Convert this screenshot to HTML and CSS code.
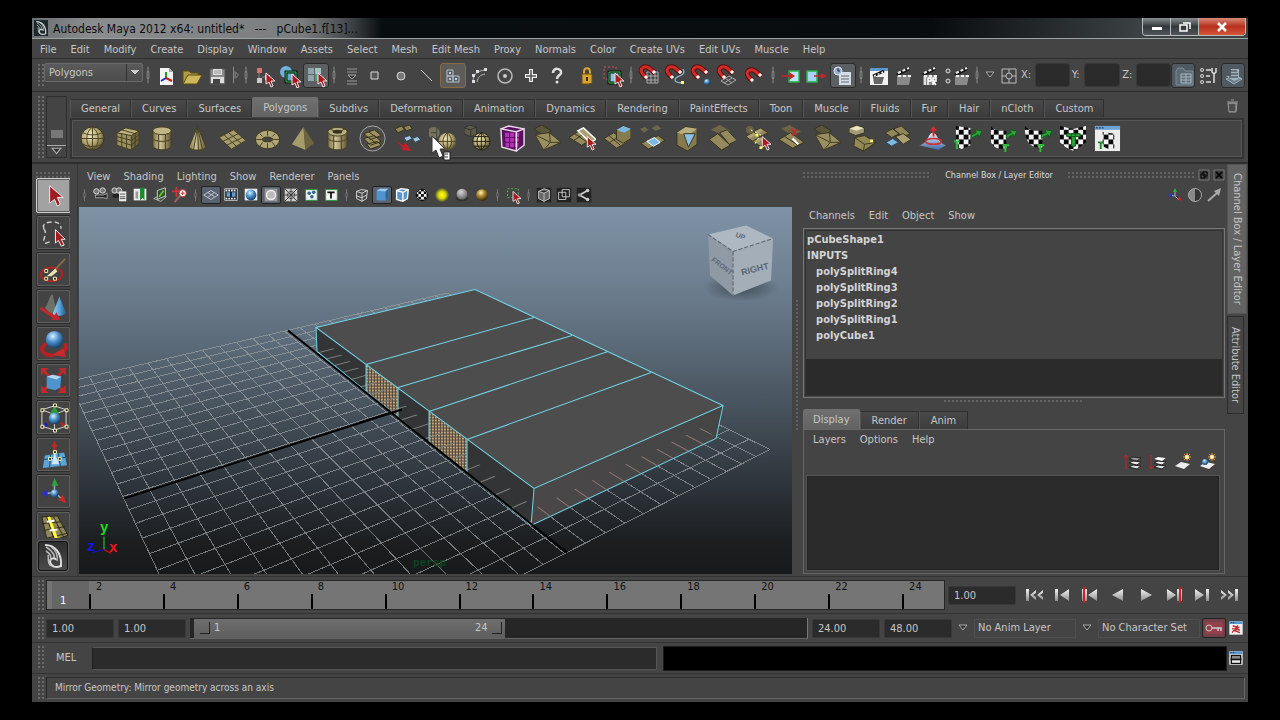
FILE: index.html
```html
<!DOCTYPE html>
<html lang="en">
<head>
<meta charset="utf-8">
<title>Autodesk Maya 2012 x64: untitled*</title>
<link rel="stylesheet" href="styles.css">
</head>
<body>
<svg class="defs" aria-hidden="true">
<defs>
<radialGradient id="gTan" cx=".4" cy=".35" r=".7"><stop offset="0" stop-color="#f4ebc0"/><stop offset=".6" stop-color="#a99c68"/><stop offset="1" stop-color="#4e4728"/></radialGradient>
<linearGradient id="gCyl"><stop offset="0" stop-color="#7a7148"/><stop offset=".4" stop-color="#cfc494"/><stop offset="1" stop-color="#5e5634"/></linearGradient>
<radialGradient id="gBlue" cx=".4" cy=".3" r=".7"><stop offset="0" stop-color="#d8f0ff"/><stop offset=".5" stop-color="#4a90cc"/><stop offset="1" stop-color="#173e66"/></radialGradient>
<radialGradient id="gGrey" cx=".4" cy=".3" r=".7"><stop offset="0" stop-color="#d8d8d8"/><stop offset="1" stop-color="#666"/></radialGradient>
<radialGradient id="gGold" cx=".4" cy=".3" r=".7"><stop offset="0" stop-color="#fff6c0"/><stop offset=".4" stop-color="#b8923a"/><stop offset="1" stop-color="#3a2a08"/></radialGradient>
<radialGradient id="gSun"><stop offset="0" stop-color="#ffff30"/><stop offset=".5" stop-color="#d8d800"/><stop offset="1" stop-color="#d8d800" stop-opacity="0"/></radialGradient>
<linearGradient id="gPeak" x2="0" y2="1"><stop offset="0" stop-color="#f0f6ff"/><stop offset="1" stop-color="#3a66a8"/></linearGradient>
<linearGradient id="gKey" x2="0" y2="1"><stop offset="0" stop-color="#f4f4f4"/><stop offset="1" stop-color="#8c8c8c"/></linearGradient>
<linearGradient id="gCone"><stop offset="0" stop-color="#9ad0f0"/><stop offset=".5" stop-color="#5aa4d8"/><stop offset="1" stop-color="#1f5a8c"/></linearGradient>
<pattern id="chk" width="10" height="10" patternUnits="userSpaceOnUse"><path fill="#f4f4f4" d="M0 0h10v10H0z"/><path fill="#080808" d="M0 0h5v5H0zM5 5h5v5H5z"/></pattern>
<pattern id="chk3" width="6" height="6" patternUnits="userSpaceOnUse"><path fill="#f4f4f4" d="M0 0h6v6H0z"/><path fill="#080808" d="M0 0h3v3H0zM3 3h3v3H3z"/></pattern>
<g id="rc"><path d="M0 0v11l3-2 2 5 2-1-2-5h4z" fill="#a81c20" stroke="#f0e4e4"/></g>
<g id="mag"><path d="M9 14L5 9C2 4 8 1 12 4l6 5" fill="none" stroke="#571010" stroke-width="5"/><path d="M9 14L5 9C2 4 8 1 12 4l6 5" fill="none" stroke="#d32a26" stroke-width="3"/><path d="M8 12l2 2M16 7l2 2" stroke="#fff" stroke-width="3"/></g>
<g id="clap"><path d="M4 11h14l-2 10H4z" fill="#8a8a8a"/><path d="M3 10l13-7 1 3L5 12z" fill="#1a1a1a"/><path d="M5 9l11-5M5 12h14" stroke="#f0f0f0" stroke-width="2" stroke-dasharray="3 2" fill="none"/></g>
<g id="winbox"><path d="M2 2h20v20H2z" fill="#f2f2f2"/><path d="M2 2h20v4H2z" fill="#5a9ad0"/><path d="M4 4h7" stroke="#123" stroke-dasharray="2 1"/></g>
<g id="quads"><path d="M2 12l8-5 7 5-8 5zM10 7l7-4 8 5-8 4zM9 17l8-5 8 5-8 5z" fill="#8f8659" stroke="#403a20"/><path d="M3 12l7-4 3 2-7 4zM11 7l6-3 3 2-6 3zM10 17l7-4 3 2-7 4z" fill="#aca273"/></g>
<g id="chkgreen"><path d="M18 14v-4l5-2-1-3 7 1-3 7-1-3-4 2z" fill="#27a436" stroke="#125a1a"/></g>
<symbol id="sep" viewBox="0 0 8 24"><path d="M4 2v20" stroke="#999"/><path d="M3 8h2v8H3z" fill="#333" stroke="#999"/></symbol>
<symbol id="tri" viewBox="0 0 12 10"><path d="M2 2h8L6 7z" fill="#333" stroke="#aaa"/></symbol>

<symbol id="logo" viewBox="0 0 24 24"><path d="M4 1c10 0 17 8 16 21-5 2-10 1-11-4 0-4 5-5 6-2" fill="none" stroke="#ddd" stroke-width="2"/><path d="M5 3c7 4 9 9 8 11M5 7c5 3 6 7 4 10M7 11c1 4-1 8 3 11M10 3c6 4 7 9 6 14" fill="none" stroke="#bbb" stroke-width="1.5"/></symbol>

<symbol id="t-new" viewBox="0 0 24 24"><path d="M6 4h9l4 4v13H6z" fill="#f4f4f4"/><path d="M15 4v4h4z" fill="#aaa"/><path d="M12 14V8" stroke="#1a9a2a" stroke-width="2"/><path d="M12 14l-5 3" stroke="#2030c0" stroke-width="2"/><path d="M12 14l6 3" stroke="#c81a1a" stroke-width="2"/></symbol>
<symbol id="t-open" viewBox="0 0 24 24"><path d="M3 20V7h6l2 2h7v4" fill="#b09a44" stroke="#5c4c12"/><path d="M3 20l5-9h14l-5 9z" fill="#cdb65c" stroke="#5c4c12"/></symbol>
<symbol id="t-save" viewBox="0 0 24 24"><path d="M4 5h15v15H4z" fill="#8a8a8a" stroke="#555"/><path d="M7 5h9v6H7z" fill="#ddd"/><path d="M8 7h7M8 9h7" stroke="#999"/><path d="M5 13h13v6H5z" fill="#ddd"/><path d="M7 15h7v5H7z" fill="#444"/></symbol>
<symbol id="t-arrow" viewBox="0 0 12 24"><path d="M3 2v20M5 8l4 4-4 4z" fill="none" stroke="#999"/></symbol>
<symbol id="t-hier" viewBox="0 0 24 24"><path d="M5 4h5v5H5z" fill="#e07070"/><path d="M5 14h5v5H5zM13 11h5v5h-5z" fill="#ccc"/><path d="M7 9v5M10 13h3" stroke="#888"/><use href="#rc" x="14" y="9"/></symbol>
<symbol id="t-obj" viewBox="0 0 24 24"><circle cx="8" cy="8" r="6" fill="#6fb2dc"/><path d="M8 8h10v10H8z" fill="#6aa8d0" stroke="#111" stroke-width="3"/><path d="M8 8h10v10H8z" fill="none" stroke="#2ac050"/><use href="#rc" x="14" y="10"/></symbol>
<symbol id="t-comp" viewBox="0 0 24 24"><path d="M4 4h6v6H4zM11 4h6v6h-6zM4 11h6v6H4zM11 11h6v6h-6z" fill="#8fa6a8"/><path d="M11 4h6v6h-6z" fill="#a4c4be"/><path d="M12 10v7" stroke="#3aaa7a" stroke-width="2"/><use href="#rc" x="14" y="9"/></symbol>
<symbol id="t-coll" viewBox="0 0 24 24"><path d="M7 5h10M7 8h10M7 17h10M7 20h10" stroke="#999"/><path d="M8 11h8l-4 4z" fill="#333" stroke="#aaa"/></symbol>
<symbol id="t-sq" viewBox="0 0 24 24"><path d="M8 8h7v7H8z" fill="#555" stroke="#d8d8d8"/></symbol>
<symbol id="t-dot" viewBox="0 0 24 24"><circle cx="12" cy="12" r="4" fill="#777" stroke="#d8d8d8"/></symbol>
<symbol id="t-line" viewBox="0 0 24 24"><path d="M6 6l11 11" stroke="#ccc"/></symbol>
<symbol id="t-face" viewBox="0 0 24 24"><path d="M6 6h6v6H6zM6 12h6v6H6zM12 12h6v6h-6z" fill="#555e66" stroke="#b4bcc4"/><path d="M8 9h2M8 15h2M14 15h2" stroke="#ccd" stroke-width="2"/></symbol>
<symbol id="t-curve" viewBox="0 0 24 24"><path d="M6 18c0-8 4-11 12-12M10 18c1-5 3-7 8-8" fill="none" stroke="#bbb"/><path d="M5 16h3v3H5zM5 10h3v3H5zM9 6h3v3H9zM17 4h3v3h-3z" fill="#ddd"/></symbol>
<symbol id="t-circ" viewBox="0 0 24 24"><circle cx="12" cy="12" r="7" fill="none" stroke="#bbb" stroke-width="1.5"/><circle cx="12" cy="12" r="2" fill="#ccc"/></symbol>
<symbol id="t-plus" viewBox="0 0 24 24"><path d="M12 5v13M6 12h12" stroke="#eee" stroke-width="4"/><path d="M12 6v11M7 12h10" stroke="#555" stroke-width="1.5"/></symbol>
<symbol id="t-q" viewBox="0 0 24 24"><path d="M8 9c0-6 9-5 8 0-1 3-4 2-4 6" fill="none" stroke="#e0e0e0" stroke-width="2.5"/><circle cx="12" cy="18" r="1.5" fill="#e0e0e0"/></symbol>
<symbol id="t-lock" viewBox="0 0 24 24"><path d="M9 11V8c0-5 6-5 6 0v3" fill="none" stroke="#d8a838" stroke-width="2"/><path d="M7 10h10v9l-3 1H7z" fill="#d9a42e" stroke="#6d4c08"/><path d="M12 13v4" stroke="#3a2804" stroke-width="2"/></symbol>
<symbol id="t-hl" viewBox="0 0 24 24"><path d="M3 3h12v12H3z" fill="none" stroke="#d84a5a" stroke-dasharray="2 2"/><path d="M8 8h11v11H8z" fill="#8cc4e8" stroke="#111" stroke-width="3"/><path d="M8 8h11v11H8z" fill="none" stroke="#30c050"/><use href="#rc" x="14" y="9"/></symbol>
<symbol id="t-m1" viewBox="0 0 24 24"><path d="M10 8h11v11H10zM14 8v11M18 8v11M10 12h11M10 16h11" fill="none" stroke="#aaa"/><use href="#mag"/></symbol>
<symbol id="t-m2" viewBox="0 0 24 24"><path d="M20 5c4 8-8 6-8 11 0 3 5 3 9 3" fill="none" stroke="#7faac0" stroke-width="1.5"/><path d="M18 17h3v3h-3z" fill="#ff6"/><use href="#mag"/></symbol>
<symbol id="t-m3" viewBox="0 0 24 24"><circle cx="18" cy="18" r="3" fill="url(#gBlue)"/><use href="#mag"/></symbol>
<symbol id="t-m4" viewBox="0 0 24 24"><path d="M6 17l8-5 7 4-8 5zM10 14l7 5M9 19l8-5" fill="none" stroke="#aaa"/><use href="#mag"/></symbol>
<symbol id="t-m5" viewBox="0 0 24 24"><use href="#mag" x="2" y="3"/></symbol>
<symbol id="t-in" viewBox="0 0 24 24"><path d="M8 7h10v11H8z" fill="#bfe0ff" stroke="#28b048" stroke-width="1.5"/><path d="M0 12h9" stroke="#c22" stroke-width="1.5"/><path d="M8 8l6 4-6 4z" fill="#c22"/></symbol>
<symbol id="t-out" viewBox="0 0 24 24"><path d="M3 7h10v11H3z" fill="#a8d0f8" stroke="#28b048" stroke-width="1.5"/><path d="M10 12h8" stroke="#c22" stroke-width="1.5"/><path d="M17 9l6 3-6 3z" fill="#c22"/></symbol>
<symbol id="t-hist" viewBox="0 0 24 24"><path d="M8 8h12v13H8z" fill="#d4dde6"/><path d="M10 12h8M10 15h8M10 18h8" stroke="#667"/><circle cx="7" cy="7" r="4" fill="#9ac" stroke="#def"/><path d="M7 4v3h2" stroke="#123" fill="none"/></symbol>
<symbol id="t-rv" viewBox="0 0 24 24"><path d="M3 4h18v17H3z" fill="#f2f2f2"/><path d="M3 4h18v3H3z" fill="#5a9ad0"/><path d="M6 13h11l-2 7H7z" fill="#666"/><path d="M6 12l11-5" stroke="#111" stroke-width="3"/><path d="M7 12l9-4" stroke="#eee" stroke-width="1.5" stroke-dasharray="2 2"/></symbol>
<symbol id="t-clap" viewBox="0 0 24 24"><use href="#clap"/></symbol>
<symbol id="t-ipr" viewBox="0 0 24 24"><use href="#clap"/><path d="M6 13v8M9 21v-7h3v3H9M14 21v-7h3v3h-3l3 4" stroke="#fff" stroke-width="1.5" fill="none"/></symbol>
<symbol id="t-rs" viewBox="0 0 24 24"><use href="#clap" x="6"/><circle cx="3" cy="7" r="2" fill="#555" stroke="#ddd"/><circle cx="3" cy="17" r="2" fill="#555" stroke="#ddd"/></symbol>
<symbol id="t-xyz" viewBox="0 0 24 24"><path d="M5 5h14v14H5zM12 5v14M5 12h14" fill="none" stroke="#bbb"/><circle cx="12" cy="12" r="3" fill="#444" stroke="#bbb"/></symbol>
<symbol id="t-cb" viewBox="0 0 24 24"><path d="M4 7l2-3h5l2 3h8v14H4z" fill="#5b6a75" stroke="#7c8d98"/><path d="M9 10h10v9H9zM9 13h10M9 16h10M14 10v9" fill="none" stroke="#aebac2"/></symbol>
<symbol id="t-ts" viewBox="0 0 24 24"><circle cx="6" cy="6" r="1.5" fill="none" stroke="#ddd"/><circle cx="6" cy="12" r="1.5" fill="none" stroke="#ddd"/><circle cx="6" cy="18" r="1.5" fill="none" stroke="#ddd"/><path d="M10 6h5M10 12h4M10 18h5" stroke="#ddd" stroke-width="1.5"/><path d="M16 4v4l2 2v9M20 4v4l-2 2" fill="none" stroke="#ddd" stroke-width="1.5"/></symbol>
<symbol id="t-ly" viewBox="0 0 24 24"><path d="M4 15l8-3 8 3-8 5z" fill="#6b7b86" stroke="#9fb2bf"/><path d="M4 12h5V5h8v8l3 1-8 3z" fill="#9fb2bf"/><path d="M9 7h6M9 10h7M7 13h9" stroke="#333"/></symbol>
<symbol id="trash" viewBox="0 0 14 16"><path d="M3 5h9l-1 9H4zM2 4h11M6 2h3" fill="#777" stroke="#999"/><path d="M5 6v7M7 6v7M9 6v7" stroke="#222"/></symbol>

<symbol id="s-sphere" viewBox="0 0 28 28"><circle cx="14" cy="14" r="12" fill="url(#gTan)" stroke="#3a341c"/><path d="M2 14h24M4 8c6 3 14 3 20 0M4 20c6 3 14 3 20 0M14 2v24M14 2c-8 6-8 18 0 24M14 2c8 6 8 18 0 24" fill="none" stroke="#4c4424"/></symbol>
<symbol id="s-cube" viewBox="0 0 28 28"><path d="M3 8l9-5 14 3-8 5z" fill="#bdb280"/><path d="M3 8l15 3v15L3 21z" fill="#9c9160"/><path d="M18 11l8-5v13l-8 7z" fill="#6e653e"/><path d="M3 8l15 3v15L3 21zM18 11l8-5v13l-8 7M3 8l9-5 14 3M8 9v14M13 10v15M3 12l15 4 8-6M3 16l15 5 8-7M8 5l14 4v14" fill="none" stroke="#453e20"/></symbol>
<symbol id="s-cyl" viewBox="0 0 28 28"><path d="M4 6v16c2 5 17 5 19 0V6z" fill="url(#gCyl)" stroke="#453e20"/><ellipse cx="13.5" cy="6" rx="9.5" ry="4" fill="#c0b688" stroke="#453e20"/><path d="M4 14c2 4 17 4 19 0M10 10v15M17 10v15" fill="none" stroke="#453e20"/></symbol>
<symbol id="s-cone" viewBox="0 0 28 28"><path d="M14 2L5 23c3 4 15 4 18 0z" fill="url(#gCyl)" stroke="#453e20"/><path d="M14 2l-4 23M14 2l1 24M14 2l5 23" stroke="#453e20"/></symbol>
<symbol id="s-plane" viewBox="0 0 28 28"><path d="M0 13l15-8 13 11-15 9z" fill="#a59b6b" stroke="#453e20"/><path d="M5 10l13 12M10 8l13 11M4 17l16-8M8 21l16-8" stroke="#453e20"/></symbol>
<symbol id="s-torus" viewBox="0 0 28 28"><ellipse cx="14" cy="15" rx="9" ry="6" fill="none" stroke="#453e20" stroke-width="8"/><ellipse cx="14" cy="15" rx="9" ry="6" fill="none" stroke="#b0a574" stroke-width="6"/><path d="M6 9l3 3M14 6v5M22 9l-3 3M1 15h7M20 15h7M6 22l3-4M14 19v6M22 22l-3-4" stroke="#453e20"/></symbol>
<symbol id="s-pyr" viewBox="0 0 28 28"><path d="M15 2L3 20l14 6z" fill="#a59b6b"/><path d="M15 2l2 24 9-7z" fill="#6e653e"/></symbol>
<symbol id="s-pipe" viewBox="0 0 28 28"><path d="M4 7v15c2 5 18 5 20 0V7z" fill="url(#gCyl)" stroke="#453e20"/><ellipse cx="14" cy="7" rx="10" ry="4.5" fill="#b9ae7e" stroke="#453e20"/><ellipse cx="14" cy="7" rx="5" ry="2" fill="#38331c"/><path d="M4 14c2 4 18 4 20 0M10 11v14M18 11v14M6 4l4 2M22 4l-4 2" fill="none" stroke="#453e20"/></symbol>
<symbol id="s-comb" viewBox="0 0 28 28"><circle cx="14" cy="14" r="13" fill="#4a4a4a" stroke="#aaa"/><path d="M5 9l11-4 7 6-11 4zM5 14l11-3 7 6-11 4zM8 20l11-3 4 4-11 4z" fill="#9c9160" stroke="#353018"/><path d="M10 7l8 6M10 13l8 6" stroke="#353018"/></symbol>
<symbol id="s-sepr" viewBox="0 0 28 28"><path d="M1 4l7-3 3 4-7 3zM10 2l6-2 3 4-6 2z" fill="#8f8659" stroke="#38331c"/><path d="M10 13l6-2 3 3-6 3zM19 14l5-2 4 3-6 3z" fill="#9cc8e4" stroke="#345"/><path d="M1 16l9 5 2-3 6 9-10-1 1-3z" fill="#c02028"/></symbol>
<symbol id="s-mirror" viewBox="0 0 28 28"><circle cx="5" cy="8" r="6" fill="#77735f"/><path d="M8 3v10M2 8h6" stroke="#444"/><circle cx="19" cy="17" r="9" fill="url(#gTan)"/><path d="M10 17h18M19 8v18M19 8c-6 5-6 13 0 18M19 8c6 5 6 13 0 18" fill="none" stroke="#4c4424"/></symbol>
<symbol id="s-smooth" viewBox="0 0 28 28"><path d="M0 3l6-3 7 2v8l-7 2-6-3z" fill="#5d5a48" stroke="#333"/><path d="M0 3l7 2 6-3M7 5v7" fill="none" stroke="#333"/><circle cx="18" cy="17" r="9" fill="url(#gTan)" stroke="#2b2818"/><path d="M9 17h18M11 12h14M11 22h14M18 8v18M18 8c-6 5-6 13 0 18M18 8c6 5 6 13 0 18" fill="none" stroke="#222010"/></symbol>
<symbol id="s-purple" viewBox="0 0 28 28"><path d="M2 4l8-3 16 3v17l-8 6-15-4z" fill="#58105c"/><path d="M6 8h15l-1 15H7z" fill="#b432b8"/><path d="M11 7v17M16 7v17M6 13h15M6 18h15" stroke="#58105c"/><path d="M2 4l16 3v20L3 23zM18 7l8-3v17l-8 6M2 4l8-3 16 3" fill="none" stroke="#ecd8ec" stroke-width="1.5"/></symbol>
<symbol id="s-poly1" viewBox="0 0 28 28"><path d="M0 4l8-4 10 6-8 5z" fill="#5a563e" stroke="#38331c"/><path d="M1 10l15-2 12 10-18 8z" fill="#9a8f62" stroke="#403a20"/><path d="M1 10l16 8 11 0M17 18l-7 8M16 8l1 10" stroke="#403a20" fill="none"/></symbol>
<symbol id="s-split" viewBox="0 0 28 28"><path d="M0 13l12-8 13 9-12 7z" fill="#948a5e" stroke="#38331c"/><path d="M6 9l13 9M5 16l12-8" stroke="#38331c"/><path d="M9 6l6-3 13 12-6 3z" fill="#a9a077" stroke="#fff" stroke-width="1.5"/><use href="#rc" x="19" y="12"/></symbol>
<symbol id="s-extr" viewBox="0 0 28 28"><path d="M0 14l10-6 14 10-11 6z" fill="#948a5e" stroke="#38331c"/><path d="M5 11l12 10M6 18l11-7" stroke="#38331c"/><path d="M13 5l7-4 8 3v10l-8 5-7-4z" fill="#857c50" stroke="#38331c"/><path d="M13 5l7-4 8 3-7 4z" fill="#79b8e0"/></symbol>
<symbol id="s-bridge" viewBox="0 0 28 28"><path d="M1 4l5-2 4 3-5 3zM13 3l6-3 4 4-6 2z" fill="#6c674e"/><path d="M2 19l18-8 7 5-17 9z" fill="#8f8659" stroke="#38331c"/><path d="M8 17l8-4 6 5-7 4z" fill="#7cb8e0" stroke="#fff"/></symbol>
<symbol id="s-app" viewBox="0 0 28 28"><path d="M3 8l9-6 12 2v16l-10 7-11-6z" fill="#857b4e" stroke="#38331c"/><path d="M3 8l11 3 10-7L12 2z" fill="#b9ae80"/><path d="M10 9h12l-7 14z" fill="#8cc0e4" stroke="#38331c"/></symbol>
<symbol id="s-merge" viewBox="0 0 28 28"><path d="M2 5l9-5 11 6-9 4z" fill="#6f6848"/><path d="M0 15l9-6 13 12-9 5zM11 8l8-3 10 11-8 4z" fill="#948a5e" stroke="#38331c"/></symbol>
<symbol id="s-knife" viewBox="0 0 28 28"><use href="#quads"/><circle cx="6" cy="5" r="4" fill="#6b6440"/><path d="M7 5l10 5-7 12" fill="none" stroke="#fff" stroke-dasharray="2 3"/><path d="M12 9h3v3h-3zM16 22h3v3h-3z" fill="#ff6"/><use href="#rc" x="19" y="12"/></symbol>
<symbol id="s-cutf" viewBox="0 0 28 28"><path d="M2 4l9-4 12 7-9 4z" fill="#6b6440"/><path d="M0 15l12-7 14 10-12 6z" fill="#948a5e" stroke="#38331c"/><path d="M6 12l14 9" stroke="#38331c"/><path d="M13 4l5 6M18 4l-4 7" stroke="#c02830" stroke-width="2"/><path d="M14 14l6 6" stroke="#fff" stroke-width="2"/></symbol>
<symbol id="s-crease" viewBox="0 0 28 28"><path d="M0 3l8-3 8 3v5l-9 3-7-3z" fill="#a49b75" stroke="#38331c"/><path d="M1 4l7-3 7 2-7 3z" fill="#ece6c8"/><path d="M6 13l10-2 12 7-13 9-10-5z" fill="#938954" stroke="#38331c"/><path d="M6 13l10 7 12-2M16 20l-1 7" stroke="#38331c" fill="none"/><path d="M22 15h3v3h-3z" fill="#ff6"/></symbol>
<symbol id="s-quadb" viewBox="0 0 28 28"><path d="M1 8l8-4 7 5-8 4zM10 4l8-3 9 8-8 4z" fill="#8f8659" stroke="#38331c"/><path d="M2 18l7-4 6 4-7 4z" fill="#7cb8e0" stroke="#345"/><path d="M12 12l8-3 8 6-8 5z" fill="#a89e70" stroke="#38331c"/></symbol>
<symbol id="s-soft" viewBox="0 0 28 28"><path d="M0 21c9-1 9-12 14-13 6 1 6 11 14 13l-8 5z" fill="url(#gPeak)"/><ellipse cx="15" cy="17" rx="8" ry="3" fill="none" stroke="#d22c30" stroke-width="1.5"/><path d="M15 12V5" stroke="#d22c30" stroke-width="2"/><path d="M11 6l4-5 4 5z" fill="#d22c30"/></symbol>
<symbol id="s-uv1" viewBox="0 0 28 28"><path d="M2 1l15 2v18L8 25 2 22z" fill="url(#chk)"/><use href="#chkgreen"/><path d="M0 17h6M3 17v8" stroke="#27c436" stroke-width="2"/></symbol>
<symbol id="s-uv2" viewBox="0 0 28 28"><path d="M2 1c4 6 10 5 16 5v18c-9 2-15-2-16-7z" fill="url(#chk)"/><use href="#chkgreen"/><path d="M14 21h7M17 21v7" stroke="#27c436" stroke-width="2"/></symbol>
<symbol id="s-uv3" viewBox="0 0 28 28"><path d="M1 1c5 6 12 5 18 5v17C8 25 0 18 1 1z" fill="url(#chk)"/><use href="#chkgreen"/><path d="M14 21h7M17 21v7" stroke="#27c436" stroke-width="2"/></symbol>
<symbol id="s-uv4" viewBox="0 0 28 28"><path d="M1 1l12 3 3 0 12-3v17l-5 4-8 5-8-4-6-5z" fill="url(#chk)"/><path d="M8 9h14v3H8zM13 9h4v13h-4z" fill="#27a436" stroke="#125a1a"/></symbol>
<symbol id="s-uv5" viewBox="0 0 28 28"><path d="M1 1h26v26H1z" fill="#ececec"/><path d="M1 1h26v4H1z" fill="#6aa4d4"/><path d="M2 3h8" stroke="#123" stroke-dasharray="2 1"/><path d="M9 7l12 2v15l-6 1-6-3z" fill="url(#chk)"/><path d="M4 18h6M7 18v7" stroke="#1a8a28" stroke-width="2"/></symbol>
<symbol id="mouse" viewBox="0 0 20 26"><path d="M1 1v17l4-3 3 8 4-2-3-7h5z" fill="#fff" stroke="#333"/><path d="M13 17h6v8h-6z" fill="#fff" stroke="#222"/><path d="M14 19h3M14 22h3" stroke="#333"/></symbol>

<symbol id="p-cam" viewBox="0 0 20 20"><circle cx="6" cy="6" r="3" fill="#777" stroke="#ddd"/><circle cx="13" cy="5" r="3" fill="#777" stroke="#ddd"/><path d="M5 10h9l4-2v6l-4-1H5z" fill="#222" stroke="#aaa"/></symbol>
<symbol id="p-cam2" viewBox="0 0 20 20"><circle cx="4" cy="5" r="3" fill="#777" stroke="#ddd"/><circle cx="9" cy="5" r="3" fill="#777" stroke="#ddd"/><path d="M2 9h7v4H2z" fill="#222"/><path d="M9 6h8v11H9z" fill="#eee"/><path d="M10 9h6M10 12h6M10 14h6" stroke="#444"/></symbol>
<symbol id="p-book" viewBox="0 0 20 20"><path d="M3 3h14v13H3z" fill="#eee"/><path d="M5 6h3v8H5z" fill="#999"/><path d="M10 2h5v14l-2-3-3 3z" fill="#1c8a2c"/></symbol>
<symbol id="p-img" viewBox="0 0 20 20"><path d="M3 14l6-3 8 1-6 5z" fill="none" stroke="#bbb"/><path d="M7 5l9-3v9l-9 4z" fill="#2a4a2a" stroke="#cde0cd"/><path d="M9 12l5-7" stroke="#7ac040" stroke-width="2"/></symbol>
<symbol id="p-pan" viewBox="0 0 20 20"><path d="M6 1v11M1 6h11" stroke="#d03040" stroke-width="2"/><circle cx="13" cy="8" r="4" fill="#eee" stroke="#c33"/><path d="M13 6v4M11 8h4" stroke="#c22"/><path d="M10 11l-6 7" stroke="#966" stroke-width="2"/></symbol>
<symbol id="p-grid" viewBox="0 0 20 20"><path d="M2 10l8-5 8 5-8 5zM6 7l8 5M6 13l8-6" fill="none" stroke="#c4ccda"/></symbol>
<symbol id="p-film" viewBox="0 0 20 20"><path d="M3 3h14v13H3z" fill="#102030" stroke="#ccc"/><path d="M4 5h12M4 14h12" stroke="#eee" stroke-width="2" stroke-dasharray="2 1"/><path d="M5 7h4v5H5zM11 7h4v5h-4z" fill="#6a9ac4"/></symbol>
<symbol id="p-bsph" viewBox="0 0 20 20"><path d="M3 3h14v13H3z" fill="#e8ecf0"/><circle cx="10" cy="10" r="6" fill="url(#gBlue)"/></symbol>
<symbol id="p-ring" viewBox="0 0 20 20"><path d="M3 3h14v14H3z" fill="#999"/><circle cx="10" cy="10" r="5" fill="#bbb" stroke="#eee" stroke-width="1.5"/></symbol>
<symbol id="p-x" viewBox="0 0 20 20"><path d="M3 3h14v14H3z" fill="#ccc"/><path d="M3 3l14 14M17 3L3 17M10 3v14M3 10h14" stroke="#333"/><circle cx="10" cy="10" r="4" fill="none" stroke="#444"/></symbol>
<symbol id="p-grn" viewBox="0 0 20 20"><path d="M4 4h13v12H4z" fill="#e8f0f0" stroke="#2a9a3a"/><circle cx="8" cy="8" r="2" fill="#368"/><circle cx="13" cy="7" r="2" fill="#368"/><circle cx="11" cy="12" r="2" fill="#368"/></symbol>
<symbol id="p-t" viewBox="0 0 20 20"><path d="M4 4h13v12H4z" fill="#f4f4f4" stroke="#2a9a3a"/><path d="M6 7h8M10 7v7" stroke="#111" stroke-width="2"/></symbol>
<symbol id="p-wire" viewBox="0 0 20 20"><path d="M4 6l5-2 7 1-1 9-5 3-6-3zM4 6l6 2 6-3M10 8v9M4 11l6 2 5-3" fill="none" stroke="#ddd"/></symbol>
<symbol id="p-shade" viewBox="0 0 20 20"><path d="M4 5l4-2h9v11l-3 2H4z" fill="#4f94cc"/><path d="M4 5l4-2h9l-3 3z" fill="#a0ccee"/><path d="M14 6l3-3v11l-3 2z" fill="#2f6698"/></symbol>
<symbol id="p-both" viewBox="0 0 20 20"><path d="M4 5l5-2 8 1-1 10-5 3-7-2z" fill="#5a94c8" stroke="#fff" stroke-width="1.5"/><path d="M4 5l7 2 6-3M11 7v10" fill="none" stroke="#fff" stroke-width="1.5"/></symbol>
<symbol id="p-chk" viewBox="0 0 20 20"><circle cx="10" cy="10" r="6.5" fill="url(#chk3)" stroke="#111"/></symbol>
<symbol id="p-sun" viewBox="0 0 20 20"><circle cx="10" cy="10" r="8" fill="url(#gSun)"/></symbol>
<symbol id="p-gs" viewBox="0 0 20 20"><ellipse cx="10" cy="14" rx="7" ry="3" fill="#333"/><circle cx="10" cy="9" r="6" fill="url(#gGrey)"/></symbol>
<symbol id="p-gold" viewBox="0 0 20 20"><circle cx="10" cy="10" r="6.5" fill="url(#gGold)"/></symbol>
<symbol id="p-iso" viewBox="0 0 20 20"><path d="M4 3h12v10H4z" fill="none" stroke="#5ac05a" stroke-dasharray="2 2"/><use href="#rc" x="10" y="6"/></symbol>
<symbol id="p-k1" viewBox="0 0 20 20"><path d="M2 2h16v16H2z" fill="#222"/><path d="M4 6l6-3 6 2v9l-6 3-6-3zM4 6l6 2 6-3M10 8v9" fill="#666" stroke="#ccc"/></symbol>
<symbol id="p-k2" viewBox="0 0 20 20"><path d="M2 2h16v16H2z" fill="#222"/><path d="M4 7h8v8H4zM8 4h8v8H8z" fill="none" stroke="#ccc"/></symbol>
<symbol id="p-k3" viewBox="0 0 20 20"><path d="M2 2h16v16H2z" fill="#222"/><path d="M5 10l9-5M5 10l9 5" stroke="#ccc" stroke-width="2"/><circle cx="5" cy="10" r="2" fill="#999"/><circle cx="14" cy="5" r="2" fill="#ccc"/><circle cx="14" cy="15" r="2" fill="#ccc"/></symbol>

<symbol id="b-sel" viewBox="0 0 32 32"><path d="M12 6v18l5-4 3 7 3-2-3-7h6z" fill="#a01c20" stroke="#eee"/></symbol>
<symbol id="b-lasso" viewBox="0 0 32 32"><path d="M6 12c-2-7 4-6 9-7 6 0 8 2 9 7M6 12c5 6-4 14 2 15l6-2" fill="none" stroke="#ccc" stroke-width="1.5" stroke-dasharray="5 3"/><path d="M18 13v14l3-3 3 6 3-1-3-6h4z" fill="#a01c20" stroke="#eee"/></symbol>
<symbol id="b-paint" viewBox="0 0 32 32"><ellipse cx="14" cy="21" rx="11" ry="7" fill="none" stroke="#b82024" stroke-width="2"/><path d="M28 5L17 17" stroke="#8a6a40" stroke-width="2"/><path d="M18 15l2 3-6 5-5 0z" fill="#e8e0b0"/><path d="M7 16h3v3H7zM7 24h3v3H7zM16 24h3v3h-3z" fill="#222" stroke="#fff8a0"/></symbol>
<symbol id="b-move" viewBox="0 0 32 32"><path d="M7 17c4-3 4-12 8-14l4 17-6 4z" fill="#6d7268"/><path d="M22 6l-7 18c3 3 11 2 14-1z" fill="url(#gCone)"/><path d="M3 16l14 9 2-3 4 8-10 0 2-2L2 19z" fill="#c0282c"/></symbol>
<symbol id="b-rot" viewBox="0 0 32 32"><path d="M8 16c-8 6-2 13 8 12" fill="none" stroke="#b82024" stroke-width="4"/><path d="M28 16c2 5 0 8-3 9" fill="none" stroke="#b82024" stroke-width="4"/><path d="M14 28l12-7 3 9z" fill="#c82a2c"/><circle cx="17" cy="12" r="9" fill="url(#gBlue)"/></symbol>
<symbol id="b-scale" viewBox="0 0 32 32"><path d="M3 3h8l-3 3 17 18 3-3 1 8h-9l3-3L6 8 3 11zM29 3v8l-3-3L8 26l3 3H3v-8l3 3L24 6l-3-3z" fill="#c0282c"/><path d="M9 12l6-2 9 2-1 11-5 3-9-2z" fill="#4f94cc"/><path d="M9 12l6-2 9 2-5 3z" fill="#b0d8f4"/></symbol>
<symbol id="b-uni" viewBox="0 0 32 32"><path d="M4 8l13-4 12 4v17l-12 4-13-4zM4 8l13 5 12-5M17 13v16" fill="none" stroke="#d8d8d8"/><path d="M12 12l5-8 5 8z" fill="#2a9a3a"/><circle cx="17" cy="17" r="6" fill="url(#gBlue)"/><path d="M23 20l6 3-5 3z" fill="#b22"/><path d="M9 21l-4 3 5 2z" fill="#22a"/><path d="M3 7h3v3H3zM28 7h3v3h-3zM3 24h3v3H3zM28 24h3v3h-3zM16 2h3v3h-3zM16 28h3v3h-3z" fill="#222" stroke="#ffb"/></symbol>
<symbol id="b-soft" viewBox="0 0 32 32"><path d="M7 17l20-3 3 13-25 3z" fill="#5aa4d8"/><path d="M6 21l22-2M13 16l-1 13M21 15l2 13" stroke="#1c4468"/><path d="M17 14l5 12h-8z" fill="#cfe8f8"/><path d="M17 13V5" stroke="#c22" stroke-width="2"/><path d="M14 8l3-6 3 6z" fill="#c22"/><path d="M16 12h3v3h-3zM11 19h3v3h-3zM21 19h3v3h-3z" fill="#222" stroke="#ffb"/></symbol>
<symbol id="b-manip" viewBox="0 0 32 32"><path d="M17 17V8M17 17l-9 1M17 17l7 6" stroke="#9ac" stroke-width="1.5"/><path d="M14 10l3-8 4 8z" fill="#2aa43a"/><path d="M10 14v8l-7-4z" fill="#2a30c0"/><path d="M21 25l5-6 3 9z" fill="#c62828"/><circle cx="17" cy="18" r="4" fill="url(#gBlue)"/></symbol>
<symbol id="b-last" viewBox="0 0 32 32"><path d="M4 4l16-1 11 20-21 8z" fill="#8f8659" stroke="#2c2814"/><path d="M4 11l20-2M6 18l22-4M9 26l21-5M9 4l8 25M16 4l11 22" stroke="#2c2814"/><path d="M11 4l9 25" stroke="#ff3" stroke-width="3"/><path d="M9 9l8-1M12 18l8-1" stroke="#fff" stroke-width="2"/></symbol>

<symbol id="c-axis" viewBox="0 0 16 16"><path d="M8 9V3M8 9l-6-1M8 9l4 4" stroke="#9ac"/><path d="M6 5l2-4 2 4z" fill="#2b3"/><path d="M5 6v5L1 8z" fill="#23c"/><path d="M10 12l3-2 2 4z" fill="#c22"/></symbol>
<symbol id="c-half" viewBox="0 0 16 16"><circle cx="8" cy="8" r="6.5" fill="#888" stroke="#aaa"/><path d="M8 2a6 6 0 010 12z" fill="#333"/></symbol>
<symbol id="c-arr" viewBox="0 0 16 16"><path d="M1 14l9-8" stroke="#aaa" stroke-width="2"/><path d="M7 4l7-3-2 8z" fill="#aaa"/></symbol>
<symbol id="c-float" viewBox="0 0 12 12"><path d="M1 1h10v10H1z" fill="#3a3a3a" stroke="#777"/><path d="M5 3h4v4H5zM3 5h4v4H3z" fill="#555" stroke="#000"/></symbol>
<symbol id="c-close" viewBox="0 0 12 12"><path d="M1 1h10v10H1z" fill="#3a3a3a" stroke="#777"/><path d="M3 3l6 6M9 3L3 9" stroke="#000" stroke-width="1.5"/></symbol>
<symbol id="l-stack" viewBox="0 0 20 20"><path d="M6 15l4-2 8 1-4 3z" fill="#ddd" stroke="#222"/><path d="M6 11l4-2 8 1-4 3z" fill="#eee" stroke="#222"/><path d="M6 7l4-2 8 1-4 3z" fill="#999" stroke="#222"/></symbol>
<symbol id="l-up" viewBox="0 0 20 20"><use href="#l-stack"/><path d="M3 17V4M1 6l2-3 2 3" stroke="#c22" fill="none"/></symbol>
<symbol id="l-down" viewBox="0 0 20 20"><use href="#l-stack"/><path d="M6 7l4-2 8 1-4 3z" fill="#fff"/><path d="M3 3v13M1 14l2 3 2-3" stroke="#c22" fill="none"/></symbol>
<symbol id="l-new" viewBox="0 0 20 20"><path d="M2 14l6-4 9 2-6 5z" fill="#eee"/><path d="M14 1v8M10 5h8M11 2l6 6M17 2l-6 6" stroke="#f0a030"/><circle cx="14" cy="5" r="2" fill="#fff6c0"/></symbol>
<symbol id="l-newsel" viewBox="0 0 20 20"><use href="#l-new"/><circle cx="7" cy="10" r="3" fill="url(#gBlue)"/></symbol>

<symbol id="k-start" viewBox="0 0 20 16"><path d="M2 2h3v12H2zM12 3v10L6 8zM19 3v10l-6-5z" fill="url(#gKey)"/><path d="M12 6v4L9 8zM19 6v4l-3-2z" fill="#444"/></symbol>
<symbol id="k-prev" viewBox="0 0 20 16"><path d="M3 2h3v12H3zM17 2v12L8 8z" fill="url(#gKey)"/></symbol>
<symbol id="k-pkey" viewBox="0 0 20 16"><path d="M2 2h5v12H2zM17 2v12L8 8z" fill="url(#gKey)"/><path d="M4 0v16" stroke="#d02020" stroke-width="2"/></symbol>
<symbol id="k-back" viewBox="0 0 20 16"><path d="M15 2v12L4 8z" fill="url(#gKey)"/></symbol>
<symbol id="k-play" viewBox="0 0 20 16"><path d="M5 2v12l11-6z" fill="url(#gKey)"/></symbol>
<symbol id="k-key" viewBox="0 0 20 16"><path d="M1 2h18v12H1z" fill="#94404c"/><circle cx="5" cy="8" r="3" fill="none" stroke="#ccc"/><path d="M8 8h9v3M14 8v3" fill="none" stroke="#ccc" stroke-width="1.5"/></symbol>
<symbol id="k-pref" viewBox="0 0 24 24"><use href="#winbox"/><path d="M7 9l9 2-6 5 8 3M15 8l-9 11M6 13l12 2" fill="none" stroke="#c22c34" stroke-width="2"/></symbol>
<symbol id="k-script" viewBox="0 0 24 24"><use href="#winbox"/><path d="M5 8h14v12H5z" fill="#888" stroke="#111" stroke-width="2"/><path d="M4 14h16" stroke="#111" stroke-width="2"/><path d="M6 16h12v3H6z" fill="#eee"/></symbol>
</defs>
</svg>

<div class="app">
<header class="title">
  <svg class="logo"><use href="#logo"/></svg>
  <h1>Autodesk Maya 2012 x64: untitled*&nbsp;&nbsp; ---&nbsp;&nbsp; pCube1.f[13]...</h1>
  <div class="wbtns">
    <button class="wb" aria-label="Minimize"><svg viewBox="0 0 12 10"><path d="M1 5h10v3H1z" fill="#fff"/></svg></button>
    <button class="wb" aria-label="Restore"><svg viewBox="0 0 12 10"><path d="M4 1h7v6M1 3h7v6H1z" fill="none" stroke="#fff" stroke-width="1.5"/></svg></button>
    <button class="wb close" aria-label="Close"><svg viewBox="0 0 12 10"><path d="M2 1l8 8M10 1L2 9" stroke="#fff" stroke-width="2.5"/></svg></button>
  </div>
</header>

<nav class="menu main-menu"><button>File</button><button>Edit</button><button>Modify</button><button>Create</button><button>Display</button><button>Window</button><button>Assets</button><button>Select</button><button>Mesh</button><button>Edit Mesh</button><button>Proxy</button><button>Normals</button><button>Color</button><button>Create UVs</button><button>Edit UVs</button><button>Muscle</button><button>Help</button></nav>

<div class="toolbar">
  <span class="grip"></span>
  <select class="mode" aria-label="Menu set"><option>Polygons</option></select>
  <svg class="sep"><use href="#sep"/></svg>
  <button class="tb" aria-label="New scene"><svg><use href="#t-new"/></svg></button>
  <button class="tb" aria-label="Open scene"><svg><use href="#t-open"/></svg></button>
  <button class="tb" aria-label="Save scene"><svg><use href="#t-save"/></svg></button>
  <svg class="sep"><use href="#t-arrow"/></svg>
  <svg class="sep"><use href="#sep"/></svg>
  <button class="tb" aria-label="Select by hierarchy"><svg><use href="#t-hier"/></svg></button>
  <button class="tb" aria-label="Select by object"><svg><use href="#t-obj"/></svg></button>
  <button class="tb on" aria-label="Select by component"><svg><use href="#t-comp"/></svg></button>
  <svg class="sep"><use href="#sep"/></svg>
  <button class="tb narrow" aria-label="Selection masks"><svg><use href="#t-coll"/></svg></button>
  <button class="tb" aria-label="Points"><svg><use href="#t-sq"/></svg></button>
  <button class="tb" aria-label="Parm points"><svg><use href="#t-dot"/></svg></button>
  <button class="tb" aria-label="Lines"><svg><use href="#t-line"/></svg></button>
  <button class="tb on warm" aria-label="Faces"><svg><use href="#t-face"/></svg></button>
  <button class="tb" aria-label="Hulls"><svg><use href="#t-curve"/></svg></button>
  <button class="tb" aria-label="Pivots"><svg><use href="#t-circ"/></svg></button>
  <button class="tb" aria-label="Handles"><svg><use href="#t-plus"/></svg></button>
  <button class="tb" aria-label="Miscellaneous"><svg><use href="#t-q"/></svg></button>
  <button class="tb lead" aria-label="Lock selection"><svg><use href="#t-lock"/></svg></button>
  <button class="tb" aria-label="Highlight selection"><svg><use href="#t-hl"/></svg></button>
  <svg class="sep"><use href="#sep"/></svg>
  <button class="tb" aria-label="Snap to grids"><svg><use href="#t-m1"/></svg></button>
  <button class="tb" aria-label="Snap to curves"><svg><use href="#t-m2"/></svg></button>
  <button class="tb" aria-label="Snap to points"><svg><use href="#t-m3"/></svg></button>
  <button class="tb" aria-label="Snap to view planes"><svg><use href="#t-m4"/></svg></button>
  <button class="tb" aria-label="Make live"><svg><use href="#t-m5"/></svg></button>
  <svg class="sep wide"><use href="#sep"/></svg>
  <button class="tb narrow" aria-label="Inputs"><svg><use href="#t-in"/></svg></button>
  <button class="tb narrow" aria-label="Outputs"><svg><use href="#t-out"/></svg></button>
  <button class="tb on lead" aria-label="Construction history"><svg><use href="#t-hist"/></svg></button>
  <svg class="sep"><use href="#sep"/></svg>
  <button class="tb" aria-label="Render view"><svg><use href="#t-rv"/></svg></button>
  <button class="tb" aria-label="Render frame"><svg><use href="#t-clap"/></svg></button>
  <button class="tb" aria-label="IPR render"><svg><use href="#t-ipr"/></svg></button>
  <button class="tb" aria-label="Render settings"><svg><use href="#t-rs"/></svg></button>
  <svg class="sep wide"><use href="#sep"/></svg>
  <svg class="tri"><use href="#tri"/></svg>
  <button class="tb narrow" aria-label="Absolute transform"><svg><use href="#t-xyz"/></svg></button>
  <label class="xyz">X:<input type="text"></label>
  <label class="xyz">Y:<input type="text"></label>
  <label class="xyz">Z:<input type="text"></label>
  <button class="tb on blue" aria-label="Channel box"><svg><use href="#t-cb"/></svg></button>
  <button class="tb" aria-label="Tool settings"><svg><use href="#t-ts"/></svg></button>
  <button class="tb on blue" aria-label="Layer editor"><svg><use href="#t-ly"/></svg></button>
</div>

<section class="shelf">
  <span class="grip"></span>
  <div class="shelf-side"><button aria-label="Shelf tabs"></button><svg class="tri"><use href="#tri"/></svg></div>
  <div class="shelf-main">
    <div class="tabs shelf-tabs"><button>General</button><button>Curves</button><button>Surfaces</button><button class="cur">Polygons</button><button>Subdivs</button><button>Deformation</button><button>Animation</button><button>Dynamics</button><button>Rendering</button><button>PaintEffects</button><button>Toon</button><button>Muscle</button><button>Fluids</button><button>Fur</button><button>Hair</button><button>nCloth</button><button>Custom</button><svg class="trash"><use href="#trash"/></svg></div>
    <div class="icons">
      <button aria-label="Sphere"><svg><use href="#s-sphere"/></svg></button>
      <button aria-label="Cube"><svg><use href="#s-cube"/></svg></button>
      <button aria-label="Cylinder"><svg><use href="#s-cyl"/></svg></button>
      <button aria-label="Cone"><svg><use href="#s-cone"/></svg></button>
      <button aria-label="Plane"><svg><use href="#s-plane"/></svg></button>
      <button aria-label="Torus"><svg><use href="#s-torus"/></svg></button>
      <button aria-label="Pyramid"><svg><use href="#s-pyr"/></svg></button>
      <button aria-label="Pipe"><svg><use href="#s-pipe"/></svg></button>
      <button aria-label="Combine"><svg><use href="#s-comb"/></svg></button>
      <button aria-label="Separate"><svg><use href="#s-sepr"/></svg></button>
      <button aria-label="Mirror geometry"><svg><use href="#s-mirror"/></svg><svg class="pointer"><use href="#mouse"/></svg></button>
      <button aria-label="Smooth"><svg><use href="#s-smooth"/></svg></button>
      <button aria-label="Smooth proxy"><svg><use href="#s-purple"/></svg></button>
      <button aria-label="Append polygon"><svg><use href="#s-poly1"/></svg></button>
      <button aria-label="Split polygon"><svg><use href="#s-split"/></svg></button>
      <button aria-label="Extrude"><svg><use href="#s-extr"/></svg></button>
      <button aria-label="Bridge"><svg><use href="#s-bridge"/></svg></button>
      <button aria-label="Bevel"><svg><use href="#s-app"/></svg></button>
      <button aria-label="Merge"><svg><use href="#s-merge"/></svg></button>
      <button aria-label="Interactive split"><svg><use href="#s-knife"/></svg></button>
      <button aria-label="Delete edge"><svg><use href="#s-cutf"/></svg></button>
      <button aria-label="Triangulate"><svg><use href="#s-poly1"/></svg></button>
      <button aria-label="Crease"><svg><use href="#s-crease"/></svg></button>
      <button aria-label="Extract"><svg><use href="#s-quadb"/></svg></button>
      <button aria-label="Sculpt"><svg><use href="#s-soft"/></svg></button>
      <button aria-label="Planar mapping"><svg><use href="#s-uv1"/></svg></button>
      <button aria-label="Cylindrical mapping"><svg><use href="#s-uv2"/></svg></button>
      <button aria-label="Spherical mapping"><svg><use href="#s-uv3"/></svg></button>
      <button aria-label="Automatic mapping"><svg><use href="#s-uv4"/></svg></button>
      <button aria-label="UV editor"><svg><use href="#s-uv5"/></svg></button>
    </div>
  </div>
</section>

<main class="work">
  <aside class="toolbox">
    <span class="hgrip"></span>
    <div class="tools">
      <button class="cur" aria-label="Select"><svg><use href="#b-sel"/></svg></button>
      <button aria-label="Lasso"><svg><use href="#b-lasso"/></svg></button>
      <button aria-label="Paint selection"><svg><use href="#b-paint"/></svg></button>
      <button aria-label="Move"><svg><use href="#b-move"/></svg></button>
      <button aria-label="Rotate"><svg><use href="#b-rot"/></svg></button>
      <button aria-label="Scale"><svg><use href="#b-scale"/></svg></button>
      <button aria-label="Universal manipulator"><svg><use href="#b-uni"/></svg></button>
      <button aria-label="Soft modification"><svg><use href="#b-soft"/></svg></button>
      <button aria-label="Show manipulator"><svg><use href="#b-manip"/></svg></button>
      <button aria-label="Last tool"><svg><use href="#b-last"/></svg></button>
    </div>
    <button class="maya" aria-label="Maya"><svg><use href="#logo"/></svg></button>
  </aside>

  <section class="view">
    <nav class="menu view-menu"><button>View</button><button>Shading</button><button>Lighting</button><button>Show</button><button>Renderer</button><button>Panels</button></nav>
    <div class="pbar">
      <svg class="sep"><use href="#sep"/></svg>
      <button aria-label="Select camera"><svg><use href="#p-cam"/></svg></button>
      <button aria-label="Camera attributes"><svg><use href="#p-cam2"/></svg></button>
      <button aria-label="Bookmarks"><svg><use href="#p-book"/></svg></button>
      <button aria-label="Image plane"><svg><use href="#p-img"/></svg></button>
      <button aria-label="2D pan and zoom"><svg><use href="#p-pan"/></svg></button>
      <svg class="sep"><use href="#sep"/></svg>
      <button class="on" aria-label="Grid"><svg><use href="#p-grid"/></svg></button>
      <button aria-label="Film gate"><svg><use href="#p-film"/></svg></button>
      <button aria-label="Resolution gate"><svg><use href="#p-bsph"/></svg></button>
      <button class="on" aria-label="Gate mask"><svg><use href="#p-ring"/></svg></button>
      <button aria-label="Field chart"><svg><use href="#p-x"/></svg></button>
      <button aria-label="Safe action"><svg><use href="#p-grn"/></svg></button>
      <button aria-label="Safe title"><svg><use href="#p-t"/></svg></button>
      <svg class="sep"><use href="#sep"/></svg>
      <button aria-label="Wireframe"><svg><use href="#p-wire"/></svg></button>
      <button class="on" aria-label="Smooth shade"><svg><use href="#p-shade"/></svg></button>
      <button aria-label="Wireframe on shaded"><svg><use href="#p-both"/></svg></button>
      <button aria-label="Textured"><svg><use href="#p-chk"/></svg></button>
      <button aria-label="Use all lights"><svg><use href="#p-sun"/></svg></button>
      <button aria-label="Shadows"><svg><use href="#p-gs"/></svg></button>
      <button aria-label="High quality"><svg><use href="#p-gold"/></svg></button>
      <svg class="sep"><use href="#sep"/></svg>
      <button aria-label="Isolate select"><svg><use href="#p-iso"/></svg></button>
      <svg class="sep"><use href="#sep"/></svg>
      <button aria-label="X-ray"><svg><use href="#p-k1"/></svg></button>
      <button aria-label="X-ray active"><svg><use href="#p-k2"/></svg></button>
      <button aria-label="X-ray joints"><svg><use href="#p-k3"/></svg></button>
    </div>
    <svg class="scene" viewBox="79 207 713 368" preserveAspectRatio="xMidYMid slice" role="img" aria-label="Perspective view">
      <defs>
        <pattern id="dots" width="3" height="3" patternUnits="userSpaceOnUse"><path fill="#4a423a" d="M0 0h3v3H0z"/><path fill="#c4a67e" d="M0 0h2v2H0z"/></pattern>
        <clipPath id="cLeft"><path d="M317 352L531 525l3-17-203-161z"/></clipPath>
        <clipPath id="cFront"><path d="M531 525l185-87-14-10-168 81z"/></clipPath>
        <linearGradient id="front" x1="0" y1="1" x2="1" y2="0"><stop offset="0" stop-color="#4b4749"/><stop offset="1" stop-color="#434544"/></linearGradient>
        <radialGradient id="shade"><stop offset="0" stop-opacity=".4"/><stop offset="1" stop-opacity="0"/></radialGradient>
      </defs>
      <path id="grid" class="gridline"/>
      <path d="M124 499l278-89" class="axis"/>
      <path d="M316 328l159-38 248 116-7 33-185 87-214-174z" fill="#4d4d4d"/>
      <path d="M316 328l218 161-3 37-214-174z" fill="#333435"/>
      <path d="M534 489l189-83-7 33-185 87z" fill="url(#front)"/>
      <path d="M366 365l32 23v30l-32-26zM429 412l38 28v34l-38-31z" fill="url(#dots)"/>
      <path id="ticksLeft" class="tick" clip-path="url(#cLeft)"/>
      <path id="ticksFront" class="tick warm" clip-path="url(#cFront)"/>
      <path class="wire" d="M316 328l159-38 248 116-189 83zM366 365l168-47M398 388l174-52M429 412l179-60M467 440l184-67M316 328l1 24 214 174 185-87 7-33M534 489l-3 37M366 365v27M398 388v30M429 412v31M467 440v34"/>
      <path d="M288 331l279 222M360 423l42-13" class="axis"/>
      <g class="vcube">
        <ellipse cx="741" cy="288" rx="38" ry="14" fill="url(#shade)"/>
        <path d="M708 235l38-9 27 13-40 13z" fill="#aeb8c2"/>
        <path d="M708 235l25 17v44l-23-20z" fill="#8f9aa5"/>
        <path d="M733 252l40-13-2 42-38 15z" fill="#a3aeb9"/>
        <path d="M708 235l25 17 40-13M733 252v44" fill="none" stroke="#5a646e" stroke-dasharray="4 2"/>
        <text x="742" y="276" transform="rotate(-14 742 276)">RIGHT</text>
        <text x="711" y="261" transform="rotate(38 711 261)" class="small">FRONT</text>
        <text x="735" y="237" transform="rotate(22 735 237)" class="small">UP</text>
      </g>
      <path d="M104 550v-13" stroke="#19e019"/><path d="M104 550l-12 3" stroke="#1010e0"/><path d="M104 550l7 4" stroke="#e01010"/>
      <g class="axes"><text x="100" y="533" fill="#19e019">y</text><text x="109" y="552" fill="#f01818">x</text><text x="87" y="551" fill="#1414f0">z</text><text x="413" y="566" fill="#0d4420" class="persp">persp</text></g>
    </svg>
  </section>

  <span class="vgrip"></span>

  <section class="side">
    <div class="dock"><span class="hgrip"></span><h2>Channel Box / Layer Editor</h2><span class="hgrip"></span><button aria-label="Float"><svg><use href="#c-float"/></svg></button><button aria-label="Close panel"><svg><use href="#c-close"/></svg></button></div>
    <div class="cicons"><svg><use href="#c-axis"/></svg><svg><use href="#c-half"/></svg><svg><use href="#c-arr"/></svg></div>
    <nav class="menu chan-menu"><button>Channels</button><button>Edit</button><button>Object</button><button>Show</button></nav>
    <div class="chan">
      <ul><li>pCubeShape1</li><li>INPUTS</li><li class="in">polySplitRing4</li><li class="in">polySplitRing3</li><li class="in">polySplitRing2</li><li class="in">polySplitRing1</li><li class="in">polyCube1</li></ul>
      <div class="rest"></div>
    </div>
    <span class="hgrip mid"></span>
    <div class="tabs layer-tabs"><button class="cur">Display</button><button>Render</button><button>Anim</button></div>
    <div class="layers">
      <nav class="menu layer-menu"><button>Layers</button><button>Options</button><button>Help</button></nav>
      <div class="licons"><button aria-label="Move layer up"><svg><use href="#l-up"/></svg></button><button aria-label="Move layer down"><svg><use href="#l-down"/></svg></button><button aria-label="New layer"><svg><use href="#l-new"/></svg></button><button aria-label="New layer from selected"><svg><use href="#l-newsel"/></svg></button></div>
      <div class="llist"></div>
    </div>
  </section>

  <div class="vtabs"><button class="cur">Channel Box / Layer Editor</button><button>Attribute Editor</button></div>
</main>

<div class="row time">
  <span class="grip"></span>
  <div class="track"><span class="now">1</span><span>2</span><span>4</span><span>6</span><span>8</span><span>10</span><span>12</span><span>14</span><span>16</span><span>18</span><span>20</span><span>22</span><span class="last">24</span></div>
  <input class="num" type="text" value="1.00" aria-label="Current time">
  <div class="keys">
    <button aria-label="Go to start"><svg><use href="#k-start"/></svg></button>
    <button aria-label="Step back"><svg><use href="#k-prev"/></svg></button>
    <button aria-label="Previous key"><svg><use href="#k-pkey"/></svg></button>
    <button aria-label="Play backwards"><svg><use href="#k-back"/></svg></button>
    <button aria-label="Play"><svg><use href="#k-play"/></svg></button>
    <button aria-label="Next key"><svg class="flip"><use href="#k-pkey"/></svg></button>
    <button aria-label="Step forward"><svg class="flip"><use href="#k-prev"/></svg></button>
    <button aria-label="Go to end"><svg class="flip"><use href="#k-start"/></svg></button>
  </div>
</div>

<div class="row range">
  <span class="grip"></span>
  <input class="num" type="text" value="1.00" aria-label="Animation start">
  <input class="num" type="text" value="1.00" aria-label="Playback start">
  <div class="slider"><div class="thumb"><span class="h"></span><span>1</span><span class="end">24</span><span class="h"></span></div></div>
  <input class="num" type="text" value="24.00" aria-label="Playback end">
  <input class="num" type="text" value="48.00" aria-label="Animation end">
  <svg class="tri"><use href="#tri"/></svg>
  <select class="flat" aria-label="Animation layer"><option>No Anim Layer</option></select>
  <svg class="tri"><use href="#tri"/></svg>
  <select class="flat" aria-label="Character set"><option>No Character Set</option></select>
  <button class="keybtn" aria-label="Auto keyframe"><svg><use href="#k-key"/></svg></button>
  <button class="sm" aria-label="Preferences"><svg><use href="#k-pref"/></svg></button>
</div>

<div class="row mel">
  <span class="grip"></span>
  <label for="cmd">MEL</label>
  <input id="cmd" type="text">
  <output></output>
  <button class="sm" aria-label="Script editor"><svg><use href="#k-script"/></svg></button>
</div>

<footer class="row help"><span class="grip"></span><p>Mirror Geometry: Mirror geometry across an axis</p></footer>
</div>
<script src="grid.js"></script>
</body>
</html>
```
FILE: styles.css
```css
* { box-sizing: border-box; }
body {
  margin: 0;
  padding: 18px 32px;
  background: #000;
  color: #c6c6c6;
  font: 11px/16px "DejaVu Sans Condensed", "DejaVu Sans", Tahoma, sans-serif;
}
button, input, select { font: inherit; color: inherit; margin: 0; padding: 0; border: 0; background: none; }
button { display: block; flex: none; }
svg { display: block; flex: none; }
h1, h2, p, ul { margin: 0; padding: 0; font-weight: normal; }
.defs { position: absolute; width: 0; height: 0; }

.app {
  display: flex;
  flex-direction: column;
  height: calc(100vh - 36px);
  min-height: 600px;
  background: #444;
}

/* title bar */
.title {
  display: flex;
  align-items: center;
  height: 21px;
  padding-left: 2px;
  border-bottom: 1px solid #9aa5a3;
  background: linear-gradient(90deg, #6c7073 0, #8a8c8e 60px, #7a7c7e 270px, #4a4e50 312px, #080d10 350px, #080c0f 900px, #3c4144 1110px);
}
.logo { width: 14px; height: 16px; background: #1c2a30; }
.title h1 { flex: 1; padding: 2px 0 0 5px; font-size: 12px; color: #0c0c0c; white-space: nowrap; }
.wbtns { display: flex; align-self: flex-start; margin-right: 2px; border: 1px solid #b8bcbc; border-top: 0; border-radius: 0 0 4px 4px; overflow: hidden; }
.wb { width: 28px; height: 17px; border-right: 1px solid #b8bcbc; background: linear-gradient(#8a8e90, #33383b 50%, #50565a); }
.wb.close { width: 46px; border: 0; background: linear-gradient(#d88a78, #b8301c 50%, #d4563a); }
.wb svg { width: 12px; height: 10px; margin: 0 auto; }

/* menus */
.menu { display: flex; align-items: center; white-space: nowrap; }
.main-menu { height: 20px; padding: 2px 8px 0; gap: 14px; border-bottom: 1px solid #2e2e2e; }
.view-menu { height: 20px; padding-left: 8px; gap: 13px; }
.chan-menu { height: 24px; padding-left: 6px; gap: 14px; }
.layer-menu { height: 20px; padding-left: 7px; gap: 14px; }

/* grips */
.grip { flex: none; width: 6px; align-self: stretch; margin: 3px 2px 3px 6px; background: radial-gradient(circle at 1px 1px, #6a6a6a 1px, transparent 1px) 0 0 / 4px 4px; }
.hgrip { flex: 1; height: 6px; background: radial-gradient(circle at 1px 1px, #626262 1px, transparent 1px) 0 0 / 4px 4px; }
.vgrip { flex: none; width: 4px; height: 132px; margin: 136px 3px 0 4px; background: radial-gradient(circle at 1px 1px, #626262 1px, transparent 1px) 0 0 / 4px 4px; }

/* status line */
.toolbar { display: flex; align-items: center; height: 33px; padding-right: 3px; border-bottom: 1px solid #2e2e2e; }
.toolbar .grip { margin: 5px 0 5px 6px; }
.mode {
  width: 99px; height: 19px; margin-bottom: 5px; padding-left: 4px;
  appearance: none; border: 1px solid #6a6a6a; border-radius: 2px;
  background:
    linear-gradient(#303030, #303030) right 15px top 0 / 1px 100% no-repeat,
    linear-gradient(to bottom right, #ccc 50%, transparent 50%) right 3px top 6px / 4px 5px no-repeat,
    linear-gradient(to bottom left, #ccc 50%, transparent 50%) right 7px top 6px / 4px 5px no-repeat,
    linear-gradient(#5a5a5a, #4c4c4c);
}
.sep { width: 10px; height: 20px; }
.sep.wide { width: 14px; }
.tb { display: grid; place-items: center; width: 26px; height: 25px; border: 1px solid transparent; border-radius: 3px; }
.tb svg { width: 24px; height: 24px; }
.tb.narrow { width: 23px; }
.tb.lead { margin-left: 4px; }
.tb.on { background: #5c6063; border-color: #2b2b2b; }
.tb.warm { background: #5e5c58; border-color: #8a6a44; }
.tb.blue { width: 24px; background: #4e5961; }
.tri { width: 12px; height: 10px; }
.xyz { display: flex; align-items: center; gap: 4px; margin-left: 2px; flex: 1; }
.xyz input { flex: 1; width: 20px; min-width: 0; height: 24px; background: #2b2b2b; border-radius: 3px; border: 1px solid #383838; }

/* shelf */
.shelf { display: flex; height: 72px; border-bottom: 2px solid #2e2e2e; padding-right: 4px; }
.shelf > .grip { margin: 4px 2px 4px 6px; }
.shelf-side { display: flex; flex-direction: column; align-items: center; width: 21px; margin: 4px 3px 4px 0; padding-top: 33px; border: 1px solid #2e2e2e; flex: none; }
.shelf-side button { width: 12px; height: 8px; background: #777; }
.shelf-side .tri { margin-top: 7px; border-top: 1px solid #aaa; width: 19px; height: 12px; }
.shelf-main { flex: 1; min-width: 0; display: flex; flex-direction: column; padding-top: 5px; }
.tabs { display: flex; align-items: flex-end; white-space: nowrap; }
.tabs button { height: 18px; border: 1px solid #2f2f2f; border-left-color: #555; border-bottom: 0; background: linear-gradient(#484848, #3c3c3c); padding: 0 10px; }
.tabs button.cur { height: 20px; background: linear-gradient(#707070, #626262); border-color: #6e6e6e; border-radius: 2px 2px 0 0; }
.trash { width: 14px; height: 16px; margin: 0 5px 3px auto; }
.icons { display: flex; height: 41px; margin-top: 1px; padding-left: 3px; border: 2px solid #333; outline: 1px solid #555; outline-offset: -3px; align-items: center; }
.icons button { position: relative; width: 35px; }
.icons svg { width: 27px; height: 27px; margin: 0 auto; }
.icons .pointer { position: absolute; left: 6px; top: 10px; width: 20px; height: 26px; }

/* workspace */
.work { flex: 1; min-height: 0; display: flex; }
.toolbox { display: flex; flex-direction: column; width: 46px; padding: 8px 7px 5px 4px; flex: none; border-right: 1px solid #383838; }
.toolbox .hgrip { flex: none; }
.tools { flex: 1; min-height: 0; overflow: hidden; display: flex; flex-direction: column; gap: 2px; }
.tools button { width: 35px; height: 35px; border: 1px solid #2c2c2c; border-radius: 2px; box-shadow: inset 0 0 0 1px #5e5e5e; background: #434343; }
.tools button.cur { background: #a2a2a2; border-color: #ccc; }
.tools svg { width: 31px; height: 31px; margin: 0 auto; }
.maya { width: 30px; height: 30px; margin: 3px auto 0; border: 1px solid #111; border-radius: 3px; background: linear-gradient(#2e2e2e, #4a4a4a); box-shadow: 0 0 0 1px #5e5e5e; }
.maya svg { width: 24px; height: 26px; margin: 0 auto; }
.view { flex: 1; min-width: 0; display: flex; flex-direction: column; padding: 3px 0 2px 1px; }
.pbar { display: flex; align-items: center; height: 20px; padding-bottom: 4px; flex: none; }
.pbar .sep { width: 11px; height: 14px; }
.pbar button { width: 20px; height: 18px; border-radius: 2px; border: 1px solid transparent; }
.pbar button svg { width: 18px; height: 18px; margin: -1px auto 0; }
.pbar button.on { background: #5a6270; border-color: #222; }
.scene { flex: 1 1 0; min-height: 0; width: 100%; background: linear-gradient(#7f93a6 0, #6e8091 20%, #5b6a78 38%, #46525c 55%, #2e353c 75%, #1b1d1f 92%, #17191a); }
.gridline { fill: none; stroke: #9a9fa3; stroke-opacity: .7; stroke-width: 1; shape-rendering: crispEdges; }
.tick { fill: none; stroke: #7d7d7c; stroke-width: 1; }
.tick.warm { stroke: #8c7670; }
.axis { fill: none; stroke: #000; stroke-width: 2; }
.wire { fill: none; stroke: #71d3e6; stroke-width: 1; }
.vcube text { font: bold 9px "Liberation Sans", sans-serif; fill: #5c6874; }
.vcube .small { font-size: 7px; }
.axes { font: bold 14px "Liberation Mono", monospace; }
.persp { font-size: 11px; }

/* channel box and layers */
.side { flex: none; width: 34.7%; display: flex; flex-direction: column; padding-bottom: 2px; }
.dock { display: flex; align-items: center; height: 22px; gap: 3px; }
.dock h2 { font-size: 9px; padding: 0 12px; color: #ddd; }
.dock svg { width: 12px; height: 12px; }
.cicons { display: flex; justify-content: flex-end; align-items: center; gap: 4px; height: 18px; padding-right: 2px; }
.cicons svg { width: 16px; height: 16px; }
.chan { border: 1px solid #777; padding: 2px; outline: 1px solid #333; outline-offset: -3px; flex: none; }
.chan ul { list-style: none; padding: 1px 1px 15px; font-weight: bold; color: #d4d4d4; }
.chan .in { padding-left: 9px; }
.chan .rest { height: 36px; background: #2b2b2b; }
.hgrip.mid { flex: none; width: 33%; height: 3px; margin: 2px auto 6px; }
.layer-tabs { flex: none; }
.layer-tabs button { padding: 0 11px; }
.layer-tabs button.cur { padding: 0 9px; }
.layers { flex: 1; min-height: 0; display: flex; flex-direction: column; border: 1px solid #666; padding: 0 2px 2px; }
.licons { display: flex; justify-content: flex-end; gap: 5px; padding: 2px 0 3px; margin-right: 4px; }
.licons svg { width: 20px; height: 20px; }
.llist { flex: 1; margin-right: 2px; background: #2b2b2b; border: 1px solid #555; outline: 1px solid #222; outline-offset: -2px; }
.vtabs { flex: none; width: 20px; margin: 0 1px 0 2px; display: flex; flex-direction: column; gap: 2px; align-items: flex-start; }
.vtabs button { writing-mode: vertical-rl; width: 17px; padding: 10px 0; background: #454545; border: 1px solid #2c2c2c; line-height: 15px; white-space: nowrap; }
.vtabs button.cur { width: 20px; padding: 8px 0; background: #636363; border-color: #555; }

/* bottom rows */
.row { display: flex; align-items: center; flex: none; border-top: 1px solid #333; }
.time { height: 37px; }
.track { flex: 1; display: flex; height: 30px; padding: 0 5px; background: #757575; border: 1px solid #252525; color: #111; }
.track span { flex: 2 1 0; min-width: 0; text-indent: 7px; line-height: 11px; background: linear-gradient(#000, #000) 0 100% / 2px 15px no-repeat; }
.track .now { flex: 1 1 0; background: #666; color: #fff; padding-top: 14px; text-indent: 8px; }
.track .last { flex: 1 1 0; }
.num { width: 68px; height: 19px; padding-left: 5px; background: #2b2b2b; border: 1px solid #383838; border-radius: 2px; }
.time .num { margin-left: 3px; }
.keys { display: flex; gap: 8px; padding: 0 8px; }
.keys svg { width: 20px; height: 16px; }
.flip { transform: scaleX(-1); }
.range { height: 29px; gap: 4px; padding-right: 4px; }
.range .grip { margin-right: -2px; }
.slider { flex: 1; height: 21px; padding: 1px 4px; background: #262626; border-right: 1px solid #777; border-bottom: 1px solid #666; }
.thumb { display: flex; align-items: center; gap: 4px; width: 51%; height: 19px; padding: 0 3px 0 6px; background: linear-gradient(#6e6e6e, #5e5e5e); }
.thumb .end { margin-left: auto; }
.h { width: 10px; height: 12px; border: 1px solid #222; border-width: 0 1px 1px 0; }
.range .tri { margin: 0 1px; }
.flat { width: 102px; height: 19px; padding-left: 3px; appearance: none; border: 1px solid #4e4e4e; }
.keybtn { width: 24px; height: 20px; margin-left: -2px; border: 1px solid #222; border-radius: 2px; background: #74404a; }
.keybtn svg { width: 20px; height: 16px; margin: 0 auto; }
.sm svg { width: 16px; height: 16px; }
.range .sm { margin-left: -2px; }
.mel { height: 31px; padding-right: 4px; }
.mel label { width: 46px; padding-left: 10px; }
.mel input { flex: 1; height: 23px; min-width: 0; background: #2b2b2b; border: 1px solid #555; border-left-color: #222; }
.mel output { flex: 1; height: 25px; margin: 0 1px 0 6px; background: #000; border: 1px solid #1c1c1c; }
.help { height: 29px; padding-right: 3px; }
.help p { flex: 1; height: 22px; padding: 2px 8px; font-size: 10px; border: 1px solid #666; border-top-color: #2a2a2a; border-left-color: #2a2a2a; }
```
FILE: grid.js
```js
// Projects the ground plane onto the perspective view and draws its lines.
const T = [447, 293.5], R = [770, 450], B = [229, 724], L = [69, 382];

function projector(p0, p1, p2, p3) {
  const dx1 = p1[0] - p2[0], dx2 = p3[0] - p2[0], dx3 = p0[0] - p1[0] + p2[0] - p3[0];
  const dy1 = p1[1] - p2[1], dy2 = p3[1] - p2[1], dy3 = p0[1] - p1[1] + p2[1] - p3[1];
  const det = dx1 * dy2 - dx2 * dy1;
  const g = (dx3 * dy2 - dx2 * dy3) / det;
  const h = (dx1 * dy3 - dx3 * dy1) / det;
  const a = p1[0] - p0[0] + g * p1[0], b = p3[0] - p0[0] + h * p3[0];
  const d = p1[1] - p0[1] + g * p1[1], e = p3[1] - p0[1] + h * p3[1];
  return (u, v) => {
    const w = g * u + h * v + 1;
    return ((a * u + b * v + p0[0]) / w).toFixed(1) + ' ' + ((d * u + e * v + p0[1]) / w).toFixed(1);
  };
}

const at = projector(T, R, B, L);
const cells = 24;
let across = '', along = '';
for (let i = 0; i <= cells; i++) {
  const t = i / cells;
  across += `M${at(t, 0)}L${at(t, 1)}`;
  along += `M${at(0, t)}L${at(1, t)}`;
}
document.getElementById('grid').setAttribute('d', across + along);
document.getElementById('ticksLeft').setAttribute('d', across);
document.getElementById('ticksFront').setAttribute('d', along);
```
